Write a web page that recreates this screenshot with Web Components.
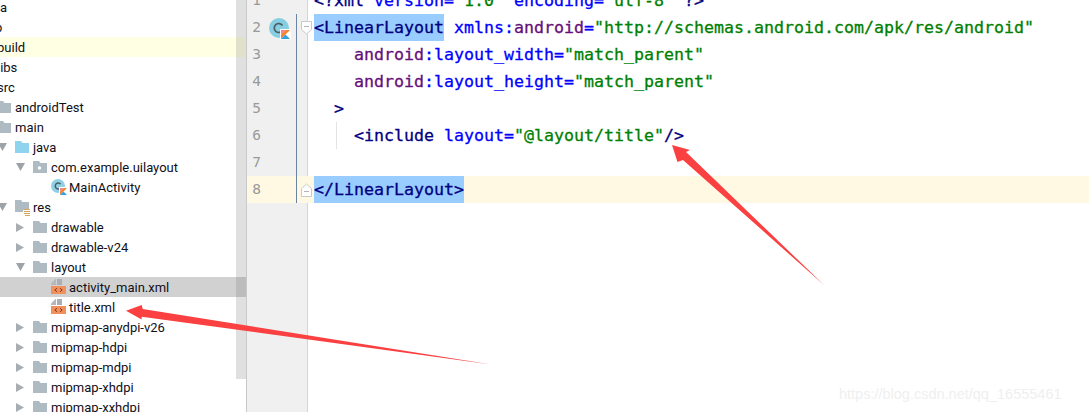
<!DOCTYPE html>
<html><head><meta charset="utf-8"><title>Android Studio</title>
<style>html,body{margin:0;height:412px;overflow:hidden;background:#fff}</style></head>
<body>
<ide-window>
  <project-tree slot="tree">
    <tree-row level="0" nudge="3">a</tree-row>
    <tree-row level="0" nudge="-2">p</tree-row>
    <tree-row level="0" hl>build</tree-row>
    <tree-row level="0">libs</tree-row>
    <tree-row level="0">src</tree-row>
    <tree-row level="1" icon="folder">androidTest</tree-row>
    <tree-row level="1" icon="folder">main</tree-row>
    <tree-row level="2" icon="java" arrow="down">java</tree-row>
    <tree-row level="3" icon="package" arrow="down">com.example.uilayout</tree-row>
    <tree-row level="4" icon="kotlin">MainActivity</tree-row>
    <tree-row level="2" icon="res" arrow="down">res</tree-row>
    <tree-row level="3" icon="folder" arrow="right">drawable</tree-row>
    <tree-row level="3" icon="folder" arrow="right">drawable-v24</tree-row>
    <tree-row level="3" icon="folder" arrow="down">layout</tree-row>
    <tree-row level="4" icon="xml" sel>activity_main.xml</tree-row>
    <tree-row level="4" icon="xml">title.xml</tree-row>
    <tree-row level="3" icon="folder" arrow="right">mipmap-anydpi-v26</tree-row>
    <tree-row level="3" icon="folder" arrow="right">mipmap-hdpi</tree-row>
    <tree-row level="3" icon="folder" arrow="right">mipmap-mdpi</tree-row>
    <tree-row level="3" icon="folder" arrow="right">mipmap-xhdpi</tree-row>
    <tree-row level="3" icon="folder" arrow="right">mipmap-xxhdpi</tree-row>
  </project-tree>
  <code-editor slot="editor">
    <code-line n="1"><syn-tok k="tag">&lt;?xml</syn-tok> <syn-tok k="attr">version</syn-tok><syn-tok k="attr">=</syn-tok><syn-tok k="str">"1.0"</syn-tok> <syn-tok k="attr">encoding</syn-tok><syn-tok k="attr">=</syn-tok><syn-tok k="str">"utf-8"</syn-tok> <syn-tok k="tag">?&gt;</syn-tok></code-line>
    <code-line n="2" marker fold="open"><syn-tok k="tag" sel>&lt;LinearLayout</syn-tok> <syn-tok k="attr">xmlns</syn-tok><syn-tok k="attr">:</syn-tok><syn-tok k="ns">android</syn-tok><syn-tok k="attr">=</syn-tok><syn-tok k="str">"http://schemas.android.com/apk/res/android"</syn-tok></code-line>
    <code-line n="3">    <syn-tok k="ns">android</syn-tok><syn-tok k="attr">:layout_width=</syn-tok><syn-tok k="str">"match_parent"</syn-tok></code-line>
    <code-line n="4">    <syn-tok k="ns">android</syn-tok><syn-tok k="attr">:layout_height=</syn-tok><syn-tok k="str">"match_parent"</syn-tok></code-line>
    <code-line n="5">  <syn-tok k="tag">&gt;</syn-tok></code-line>
    <code-line n="6" guide>    <syn-tok k="tag">&lt;include</syn-tok> <syn-tok k="attr">layout=</syn-tok><syn-tok k="str">"@layout/title"</syn-tok><syn-tok k="tag">/&gt;</syn-tok></code-line>
    <code-line n="7"></code-line>
    <code-line n="8" current fold="close"><syn-tok k="tag" sel>&lt;/LinearLayout&gt;</syn-tok></code-line>
  </code-editor>
  <red-arrows slot="overlay"></red-arrows>
  <water-mark slot="overlay">https://blog.csdn.net/qq_16555461</water-mark>
</ide-window>
<script>
const def=(name,css,html,extra)=>{
  customElements.define(name,class extends HTMLElement{
    constructor(){super();this.attachShadow({mode:'open'}).innerHTML=`<style>${css}</style>${html}`;}
    connectedCallback(){extra&&extra(this);}
  });
};
def('ide-window',`
  :host{display:block;position:relative;width:1089px;height:412px;overflow:hidden;background:#fff}
  .cols{display:flex;height:100%}
  .tree{flex:0 0 246px;position:relative;overflow:hidden}
  .bar{position:absolute;left:236px;top:0;width:10px;height:379px;background:rgba(120,120,120,.23)}
  .ed{flex:1;min-width:0;border-left:1px solid #c9c9c9;overflow:hidden;
      background:linear-gradient(to right,#f0f0f0 60px,#d4d4d4 60px,#d4d4d4 61px,#fff 61px)}
`,`<div class="cols"><div class="tree"><slot name="tree"></slot><div class="bar"></div></div>
   <div class="ed"><slot name="editor"></slot></div></div><slot name="overlay"></slot>`);
def('project-tree',`:host{display:block;margin-top:-3px;font:13px/20px Roboto,"Noto Sans",sans-serif;color:#101018}`,`<slot></slot>`);

const icons={
 folder:`<svg width="14" height="12" viewBox="0 0 14 12"><path d="M0 0h6l1.500 2H14v10H0z" fill="#afbbc3"/></svg>`,
 java:`<svg width="14" height="12" viewBox="0 0 14 12"><path d="M0 0h6l1.500 2H14v10H0z" fill="#8ed4ee"/></svg>`,
 package:`<svg width="14" height="12" viewBox="0 0 14 12"><path d="M0 0h6l1.500 2H14v10H0z" fill="#afbbc3"/><circle cx="6.500" cy="7" r="1.700" fill="#fff"/></svg>`,
 res:`<svg width="18" height="16" viewBox="0 0 18 16" style="margin-top:2px"><path d="M0 0h6l1.500 2H14v8H8v2H0z" fill="#afbbc3"/><path d="M9 9h6v1H9zM9 11h6v1H9zM9 13h6v1H9zM10 15h5v1h-5z" fill="#d9a75c"/></svg>`,
 kotlin:`<svg width="16" height="16" viewBox="0 0 16 16"><circle cx="7" cy="7" r="7" fill="#8fd0e4"/><path d="M9.600 5.100A3 3 0 1 0 9.600 8.900" fill="none" stroke="#4d5a62" stroke-width="1.500"/><path d="M8 8h8v8H8z" fill="#fff"/><path d="M9 9h3.500L9 12.500z" fill="#e9829a"/><path d="M12.500 9H16l-7 7v-3.500z" fill="#f58233"/><path d="M12.500 12.500L16 16H9z" fill="#2f9fe6"/></svg>`,
 xml:`<svg width="15" height="16" viewBox="0 0 15 16"><path d="M0 4.500L4.500 0H5v6H0z" fill="#b3b8bc"/><path d="M6 0h5v6H6z" fill="#a8b0b6"/><path d="M0 7h15v8H0z" fill="#f0905f"/><path d="M6 9.200L3.800 11 6 12.800M9 9.200L11.200 11 9 12.800" fill="none" stroke="#8a3b12" stroke-width="1"/></svg>`
};
const arrows={
 down:`<svg width="9" height="8" viewBox="0 0 9 8"><path d="M0 0h9L4.500 8z" fill="#9da3a8"/></svg>`,
 right:`<svg width="8" height="9" viewBox="0 0 8 9"><path d="M0 0l8 4.500L0 9z" fill="#a8adb2"/></svg>`
};
def('tree-row',`
  :host{display:block;height:20px;white-space:nowrap;position:relative}
  :host([hl]){background:#ffffe4}
  :host([sel]){background:#d1d1d1}
  .r{display:flex;align-items:center;height:20px;position:absolute;top:0;gap:0}
  .a{width:18px;display:flex;justify-content:flex-start;padding-left:1px;box-sizing:border-box}
  .i{width:18px;height:20px;display:flex;align-items:center}
  .t{display:block;padding-top:1px;height:20px;box-sizing:border-box}
`,`<div class="r"><span class="a"></span><span class="i"></span><span class="t"><slot></slot></span></div>`,el=>{
  const s=el.shadowRoot,lv=+el.getAttribute('level'),nud=+(el.getAttribute('nudge')||0);
  const left=-3+18*lv-36+nud;
  const r=s.querySelector('.r');r.style.left=left+'px';
  s.querySelector('.a').innerHTML=arrows[el.getAttribute('arrow')]||'';
  s.querySelector('.i').innerHTML=icons[el.getAttribute('icon')]||'';
});
def('code-editor',`:host{display:block;margin-top:-13px;font:16.61px/27px "DejaVu Sans Mono",monospace}`,`<slot></slot>`);
def('code-line',`
  :host{display:block;height:27px;position:relative}
  :host([current]){background:#fff8e3}
  .row{display:flex;height:27px}
  .n{width:14px;text-align:right;font:14.5px/27px "DejaVu Sans Mono",monospace;color:#999;flex:none}
  .m{width:35px;flex:none;padding-left:8px;box-sizing:border-box;display:flex;align-items:center}
  .fl{width:1px;flex:none;}
  .sp{width:17px;flex:none}
  .c{white-space:pre;-webkit-text-stroke:.3px currentColor;position:relative}
  .f{position:absolute;left:54px;top:7px;line-height:0}
  .g{position:absolute;left:89px;top:0;width:1px;height:27px;background:#e3e3e3}
`,`<div class="row"><span class="n"></span><span class="m"></span><span class="fl"></span><span class="sp"></span><span class="c"><slot></slot></span></div><span class="f"></span>`,el=>{
  const s=el.shadowRoot,n=+el.getAttribute('n');
  s.querySelector('.n').textContent=n;
  if(n>=2)s.querySelector('.fl').style.background='#6b84a3';
  if(el.hasAttribute('marker'))s.querySelector('.m').innerHTML=`<svg width="22" height="22" viewBox="0 0 22 22" style="margin-top:2px;flex:none"><circle cx="10" cy="10" r="10" fill="#86cfe3"/><path d="M13.500 7.500A4.500 4.500 0 1 0 13.500 12.500" fill="none" stroke="#4f5c64" stroke-width="1.700"/><path d="M11 11h11v11H11z" fill="#fff"/><path d="M12 12h4.500L12 16.500z" fill="#e9829a"/><path d="M16.500 12H21l-9 9v-4.500z" fill="#f58233"/><path d="M16.500 16.500L21 21H12z" fill="#2f9fe6"/></svg>`;
  const f=el.getAttribute('fold');
  if(f){const o=f==='open';
    s.querySelector('.f').innerHTML=`<svg width="12" height="14" viewBox="0 0 12 14"><path d="${o?'M.5 .5h10v8l-5 4.500-5-4.500z':'M.5 13.500h10v-8l-5-4.500-5 4.500z'}" fill="#fff" stroke="#c9c9c9"/><path d="M3 ${o?5.500:8.500}h5" stroke="#b5b5b5"/></svg>`;}
  if(el.hasAttribute('guide')){const g=document.createElement('span');g.className='g';s.appendChild(g);}
});
def('syn-tok',`
  :host{display:inline-block;height:27px;line-height:27px;white-space:pre;vertical-align:top}
  :host([k=tag]){color:#000080}
  :host([k=attr]){color:#0000ff}
  :host([k=ns]){color:#660e7a}
  :host([k=str]){color:#008000}
  :host([sel]){background:#99ccff}
`,`<slot></slot>`);
def('red-arrows',`:host{display:block;position:absolute;left:0;top:0;width:1089px;height:412px;pointer-events:none}`,
 `<svg width="1089" height="412" viewBox="0 0 1089 412"><path d="M672 145L690 150 686 152 824.500 285.500 683 160 677.500 162z" fill="#fa4040"/><path d="M126 310.700L141.700 305 142.700 309 491 364.500 141.700 316.700 141.700 319.500z" fill="#fa4040"/></svg>`);
def('water-mark',`:host{position:absolute;left:839px;top:385px;font:14.5px/18px "Liberation Sans",sans-serif;color:#efefef;white-space:nowrap}`,`<slot></slot>`);
</script>
</body></html>
